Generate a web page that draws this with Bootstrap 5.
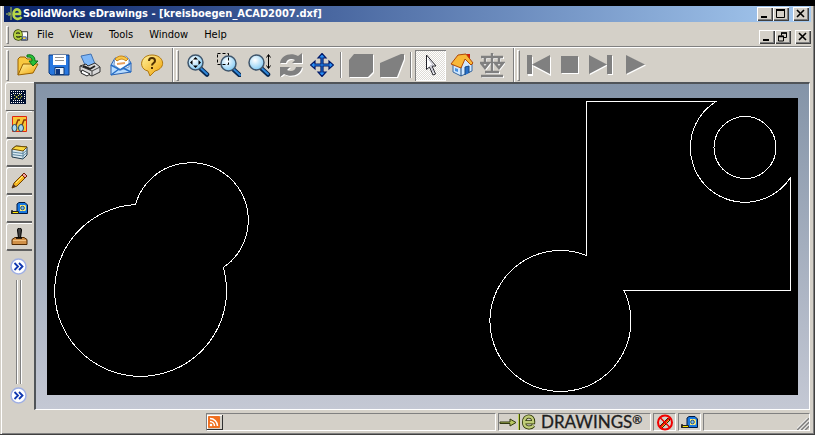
<!DOCTYPE html>
<html lang="en">
<head>
<meta charset="utf-8">
<meta name="viewport" content="width=device-width, initial-scale=1">
<title>SolidWorks eDrawings - [kreisboegen_ACAD2007.dxf]</title>
<link rel="stylesheet" href="https://cdn.jsdelivr.net/npm/bootstrap@5.3.0/dist/css/bootstrap.min.css">
<style>
:root{--face:#d4d0c8;--shade:#808080;--dark:#404040}
body{background:#000;font-family:"DejaVu Sans Condensed","DejaVu Sans",sans-serif;font-size:11px;line-height:14px;color:#000;padding-top:6px}
svg{display:block}
button{padding:0;border:0;background:none;color:#000}
.frame{background:var(--face);border-right:1px solid var(--dark);border-bottom:1px solid var(--dark);box-shadow:inset 1px 0 var(--face),inset 2px 0 #fff,inset -1px -1px var(--shade);padding:0 3px 2px 4px;min-height:0}
.titlebar{height:16px;background:linear-gradient(90deg,#0a246a,#a6caf0);color:#fff;padding:0 2px}
.titlebar h1{font-size:11px;line-height:16px;font-weight:700}
.winbtn{width:16px;height:14px;background:var(--face);box-shadow:inset 1px 1px #fff,inset -1px -1px var(--dark),inset -2px -2px var(--shade)}
.menubar{height:24px;padding:2px 0 0 2px}
.menubar a{color:#000;text-decoration:none;padding:0 8px}
.menubar a:hover{background:#0a246a;color:#fff}
.grip{width:3px;border:1px solid;border-color:#fff var(--shade) var(--shade) #fff}
.g-menu{height:18px}
.tools{height:36px;border-top:1px solid var(--shade);box-shadow:inset 0 1px #fff;padding:2px 0 1px 2px}
.g-tool{height:31px;margin-right:3px}
.tool{width:31px;height:31px;display:flex;align-items:center;justify-content:center}
.pressed{box-shadow:inset 1px 1px var(--shade),inset -1px -1px #fff;background:repeating-conic-gradient(#fff 0 25%,#dedbd5 0 50%) 0 0/2px 2px}
.etch{width:2px;height:26px;border-left:1px solid var(--shade);border-right:1px solid #fff;margin:0 3px}
.band{height:34px;margin:0 2px 0 5px}
.side{width:30px;padding-left:1px}
.tab{width:26px;height:28px;margin-left:1px;display:flex;align-items:center;justify-content:center;border-top:1px solid #fff;border-left:1px solid #fff;border-bottom:2px solid #606060;border-radius:3px 0 0 2px}
.tab.on{width:29px;height:29px;margin-left:0;padding-right:4px;border-bottom-width:1px}
.rails{width:6px;border:solid var(--shade);border-width:0 0 0 1px;box-shadow:inset 1px 0 #fff,inset -1px 0 #fff,inset -2px 0 var(--shade);margin:5px 0 3px 11px}
.round{margin:7px 0 0 5px}
.round.low{margin:0 0 6px 5px}
.view{border-top:2px solid #505458;border-left:2px solid #505458;border-right:1px solid #fff;border-bottom:1px solid #fff;background:linear-gradient(#8494a8,#c4c8d4);padding:14px 11px;min-height:0;margin-right:1px}
.sheet,.work{min-height:0}
.sheet{background:#000}
.status{height:22px;padding:3px 1px 1px 202px;gap:2px}
.pane{height:18px;border:1px solid;border-color:var(--shade) #fff #fff var(--shade);display:flex;align-items:center}
.logo{font-family:Lato,"Liberation Sans",sans-serif;font-size:17px;line-height:16px;color:#202020;-webkit-text-stroke:.3px #202020}
.logo sup{font-size:12px;line-height:0;top:-4px}
.w-logo{width:153px}.w-ico{width:23px}.w-end{width:107px}
.rss{box-shadow:inset -1px -1px #303030,inset 1px 1px #fff;width:16px;height:15px}
</style>
<script src="https://cdn.jsdelivr.net/npm/bootstrap@5.3.0/dist/js/bootstrap.bundle.min.js"></script>
</head>
<body class="vh-100 d-flex flex-column overflow-hidden">
<svg width="0" height="0" class="position-absolute" aria-hidden="true">
<defs>
<linearGradient id="gold" x1="0" y1="0" x2="1" y2="1"><stop stop-color="#fff3a0"/><stop offset="1" stop-color="#f0a000"/></linearGradient>
<radialGradient id="glass" cx=".4" cy=".35" r=".7"><stop stop-color="#fff"/><stop offset="1" stop-color="#7cc8f4"/></radialGradient>
<symbol id="lens" viewBox="0 0 24 24"><path d="M14.500 15.500 21 21.500" stroke="#082850" stroke-width="4.500" stroke-linecap="round"/><path d="M15 15.500 21 21" stroke="#2f86d8" stroke-width="2" stroke-linecap="round"/><circle cx="9.500" cy="9.500" r="7.500" fill="url(#glass)" stroke="#40566c" stroke-width="1.500"/></symbol>
<symbol id="tape" viewBox="0 0 17 13"><path d="M6 11.500V2l2-1.500h6L16.500 3v8.500z" fill="#1878e0" stroke="#001840"/><path d="M9 3h5l1 1v4l-1 1H9z" fill="#f8e878"/><circle cx="11.500" cy="6" r="1.800" fill="#78b8e8" stroke="#205080"/><path d="M.500 9.500h7v2h-7z" fill="#ffe800" stroke="#222"/><path d="M1 8v4" stroke="#222" stroke-width="1.500"/></symbol>
<symbol id="chev" viewBox="0 0 17 17"><circle cx="8.500" cy="8.500" r="7.500" fill="#fff" stroke="#a0b0e4" stroke-width="1.500"/><path d="m4.500 5 3.500 3.500L4.500 12M9 5l3.500 3.500L9 12" fill="none" stroke="#1038b0" stroke-width="1.800"/></symbol>
<symbol id="emark" viewBox="0 0 16 16"><path d="M3.500 8.300h8.700C12.800 0 2.500 1 3 8.500c.2 6 7 6 9.500 3" fill="none" stroke="#283000" stroke-width="4"/><path d="M3.500 8.300h8.700C12.800 0 2.500 1 3 8.500c.2 6 7 6 9.500 3" fill="none" stroke="#c0cc78" stroke-width="2.400"/></symbol>
</defs>
</svg>
<main class="frame d-flex flex-column flex-grow-1">
<header class="titlebar d-flex align-items-center flex-shrink-0">
<svg width="17" height="16" viewBox="0 0 17 16" class="flex-shrink-0" aria-hidden="true"><path d="M0 8h4M2.500 6 4.500 8l-2 2M5 1v13" fill="none" stroke="#b8cc50"/><path d="M8 8h6C15 1.500 7 2 7.500 8.500c.3 5 5.500 5.500 8 2.500" fill="none" stroke="#b8d848" stroke-width="2.600"/></svg>
<h1 class="mb-0 flex-grow-1 text-nowrap">SolidWorks eDrawings - [kreisboegen_ACAD2007.dxf]</h1>
<button class="winbtn" aria-label="Minimize"><svg width="16" height="14"><path d="M4 10h6" stroke="#000" stroke-width="2"/></svg></button>
<button class="winbtn me-1" aria-label="Maximize"><svg width="16" height="14"><path d="M3.500 3h8v7.500h-8z" fill="none" stroke="#000"/><path d="M3 3h9" stroke="#000" stroke-width="2"/></svg></button>
<button class="winbtn" aria-label="Close"><svg width="16" height="14"><path d="m4 3 7 7m0-7-7 7" stroke="#000" stroke-width="1.600"/></svg></button>
</header>
<nav class="menubar d-flex align-items-center flex-shrink-0">
<span class="grip g-menu me-1"></span>
<svg width="16" height="14" viewBox="0 0 17 14" class="flex-shrink-0" aria-hidden="true"><path d="M8.500 3.500h7v9h-7z" fill="#fff" stroke="#333"/><path d="M10 9h4v3h-4z" fill="#f8d850" stroke="#2850b0"/><path d="M2 7h6.500C9 1 1.500 1 2 7.500 2.200 12 7 12 9 9.500" fill="none" stroke="#304000" stroke-width="3.600"/><path d="M2 7h6.500C9 1 1.500 1 2 7.500 2.200 12 7 12 9 9.500" fill="none" stroke="#b4d040" stroke-width="2"/></svg>
<div class="d-flex flex-grow-1"><a href="#">File</a><a href="#">View</a><a href="#">Tools</a><a href="#">Window</a><a href="#">Help</a></div>
<button class="winbtn mt-1" aria-label="Minimize document"><svg width="16" height="14"><path d="M4 10h6" stroke="#000" stroke-width="2"/></svg></button>
<button class="winbtn mt-1 me-1" aria-label="Restore document"><svg width="16" height="14"><path d="M6.500 5.500V3h5v4.500H9M3.500 6h5v5h-5z" fill="none" stroke="#000"/><path d="M6 3h6M3 6.500h6" stroke="#000" stroke-width="1.500"/></svg></button>
<button class="winbtn mt-1" aria-label="Close document"><svg width="16" height="14"><path d="m4 3 7 7m0-7-7 7" stroke="#000" stroke-width="1.600"/></svg></button>
</nav>
<div class="tools d-flex align-items-center flex-shrink-0" role="toolbar" aria-label="Main tools">
<span class="grip g-tool"></span>
<button class="tool" aria-label="Open"><svg width="24" height="24" viewBox="0 0 24 24"><path d="M2 22V6l2-2h5l2 2h7v5" fill="#f8c840" stroke="#986000"/><path d="M2 22 7 11h15l-5 9z" fill="url(#gold)" stroke="#986000"/><path d="M11 2c5-1 8 1 8 6h3l-5 5-4-5h3c0-3-1-4-5-4z" fill="#28c038" stroke="#087018"/></svg></button>
<button class="tool" aria-label="Save"><svg width="24" height="24" viewBox="0 0 24 24"><path d="M2 2h20v20H4l-2-2z" fill="#2878e0" stroke="#083880"/><path d="M6 2h13v10H6z" fill="#fff"/><path d="M8 4.500h9M8 7.500h9" stroke="#909090"/><path d="M8 14.500h9v7H8z" fill="#e8f0f8" stroke="#103870"/><path d="M9 16h4v5H9z" fill="#103880"/></svg></button>
<button class="tool" aria-label="Print"><svg width="24" height="24" viewBox="0 0 24 24"><path d="m3 3 10-2 4 10-9 3z" fill="#80b8f8" stroke="#4070b0"/><path d="m2 13 6-2 2 2 7-3 5 4v5l-8 4L2 18z" fill="#d8d8d8" stroke="#333"/><path d="m2 13 12 5 8-4M14 18v5" stroke="#444" fill="none"/><path d="m4 17 8 4-3 2-6-3z" fill="#fff" stroke="#222"/><path d="m5 13 7 3 5-3" stroke="#202020" stroke-width="2" fill="none"/></svg></button>
<button class="tool" aria-label="Send by e-mail"><svg width="24" height="24" viewBox="0 0 24 24"><path d="M2 12 6 5h13l3 5v9L2 22z" fill="#b8dcff" stroke="#2860b0"/><path d="m5 12 1-7 11-2 3 3v8l-8 3z" fill="#fff" stroke="#7898c8"/><path d="M6 6c4-4 8-4 13 0l-2 2c-4-3-6-2-9 0z" fill="#f8c848" stroke="#c88010"/><path d="m2 12 9 5 11-7M2 22l8-6M22 19l-8-4" fill="none" stroke="#2870c8" stroke-width="1.500"/><path d="m8 11 8-1" stroke="#e8a060" stroke-width="2"/></svg></button>
<button class="tool" aria-label="Help"><svg width="24" height="24" viewBox="0 0 24 24"><path d="M8 18C-2 16 0 2 12 2s15 13 3 16l-5 5z" fill="url(#gold)" stroke="#b07810"/><path d="M9 8c0-4 6-4 6 0 0 2-3 2-3 4.500M12 14v2" fill="none" stroke="#503000" stroke-width="2"/></svg></button>
<span class="etch band"></span><span class="grip g-tool"></span>
<button class="tool" aria-label="Zoom to fit"><svg width="24" height="24" viewBox="0 0 24 24"><use href="#lens"/><path d="M9.500 4 12 6.500H7zM9.500 15 12 12.500H7zM4 9.500 6.500 7v5zM15 9.500 12.500 7v5z" fill="#000"/></svg></button>
<button class="tool" aria-label="Zoom to area"><svg width="24" height="24" viewBox="0 0 24 24"><use href="#lens" x="2" y="1"/><path d="M.500.500h11v11H.500z" fill="none" stroke="#000" stroke-dasharray="3 2"/></svg></button>
<button class="tool" aria-label="Zoom in or out"><svg width="24" height="24" viewBox="0 0 24 24"><use href="#lens" x="-1"/><path d="M20.500 2v13M18.500 4.500l2-3 2 3M18.500 12.500l2 3 2-3" fill="none" stroke="#000"/></svg></button>
<button class="tool" aria-label="Rotate" disabled><svg width="24" height="24" viewBox="0 0 24 24"><path transform="translate(1 1)" fill="#fff" d="M1 10C2 2 12-1 19 3l4-3v10H13l3-3c-4-2-8-1-9 3zM23 14c-1 8-11 11-18 7l-4 3V14h10l-3 3c4 2 8 1 9-3z"/><path fill="#808080" d="M1 10C2 2 12-1 19 3l4-3v10H13l3-3c-4-2-8-1-9 3zM23 14c-1 8-11 11-18 7l-4 3V14h10l-3 3c4 2 8 1 9-3z"/></svg></button>
<button class="tool" aria-label="Pan"><svg width="24" height="24" viewBox="0 0 24 24"><path d="m12 .500 4 4.500h-3v6h6V8l4.500 4-4.500 4v-3h-6v6h3l-4 4.500L8 19h3v-6H5v3L.500 12 5 8v3h6V5H8z" fill="#2890f8" stroke="#001868" stroke-width="1.200"/></svg></button>
<span class="etch"></span>
<button class="tool" aria-label="Shaded" disabled><svg width="26" height="25" viewBox="0 0 26 25"><path d="M1 7 6 1h19v18l-5 5H1z" fill="#fff" transform="translate(1 1)"/><path d="M1 7 6 1h19v18l-5 5H1z" fill="#808080"/></svg></button>
<button class="tool" aria-label="Perspective" disabled><svg width="26" height="25" viewBox="0 0 26 25"><path d="M1 10 22 1h3v5l-7 18H1z" fill="#fff" transform="translate(1 1)"/><path d="M1 10 22 1h3v5l-7 18H1z" fill="#808080"/></svg></button>
<span class="etch"></span>
<button class="tool pressed" aria-label="Select" aria-pressed="true"><svg width="24" height="24" viewBox="0 0 24 24"><path d="M7.500 2v14.500l3-2.500 3.500 8 2.500-1-3.500-8h4z" fill="#fff" stroke="#202028"/><path d="m9.500 6 4.500 6-2.500.500 3 7" fill="none" stroke="#b8b8c8"/></svg></button>
<button class="tool" aria-label="Home view"><svg width="24" height="24" viewBox="0 0 24 24"><path d="M17 1h3v9h-3z" fill="#d02010"/><path d="M3 12v7l8 4 11-5v-8l-6-6z" fill="#d0e8ff" stroke="#3868a0"/><path d="M11 14v9M15 22v-8l4-1v7" fill="#2870c8" stroke="#184880"/><path d="M1 11 8 2l8-1 7 9-2 2-6-6-4 9z" fill="#f8b838" stroke="#b04808"/><path d="m5 15 3 1v3l-3-1z" fill="#4890e0"/></svg></button>
<button class="tool" aria-label="Mass properties" disabled><svg width="25" height="25" viewBox="0 0 25 25"><path transform="translate(1 1)" d="M12 0v20M1 4h22M5 4v7M19 4v7M1 10l4 5 4-5zM15 10l4 5 4-5zM5 19h14M1 23h22" fill="none" stroke="#fff" stroke-width="2"/><path d="M12 0v20M1 4h22M5 4v7M19 4v7M1 10l4 5 4-5zM15 10l4 5 4-5zM5 19h14M1 23h22" fill="none" stroke="#808080" stroke-width="2.400"/></svg></button>
<span class="etch band"></span><span class="grip g-tool"></span>
<button class="tool" aria-label="Previous" disabled><svg width="25" height="22" viewBox="0 0 25 22"><path d="M1 2h5v19H1zM24 2v19L6 11.500z" fill="#fff" transform="translate(1 1)"/><path d="M1 1h5v19H1zM24 1v19L6 10.500z" fill="#808080"/></svg></button>
<button class="tool" aria-label="Stop" disabled><svg width="18" height="18"><path d="M1 1h17v17H1z" fill="#fff"/><path d="M0 0h17v17H0z" fill="#808080"/></svg></button>
<button class="tool" aria-label="Next" disabled><svg width="25" height="22" viewBox="0 0 25 22"><path d="M20 2h5v19h-5zM2 2v19l18-9.500z" fill="#fff"/><path d="M19 1h5v19h-5zM1 1v19l18-9.500z" fill="#808080"/></svg></button>
<button class="tool ms-1" aria-label="Play" disabled><svg width="20" height="22" viewBox="0 0 20 22"><path d="M1 2v19l19-9.500z" fill="#fff"/><path d="M0 1v19l19-9.500z" fill="#808080"/></svg></button>
</div>
<section class="work d-flex flex-grow-1">
<aside class="side d-flex flex-column flex-shrink-0">
<button class="tab on" aria-label="Drawing sheet"><svg width="16" height="14" viewBox="0 0 16 14"><path d="M0 0h16v14H0z" fill="#001030"/><path d="M1 1.500h14M1 12.500h14M1.500 4v6M14.500 4v6M3 3.500h10M3 10.500h10" stroke="#fff" stroke-dasharray="1 1"/><path d="m4 5 3 2 3-3 2 3M4 9l3-2 2 2 3-2" stroke="#e8e850" fill="none" stroke-dasharray="1.500 1"/></svg></button>
<button class="tab" aria-label="Views"><svg width="17" height="17" viewBox="0 0 17 17"><path d="M1.500.500h14v15h-14z" fill="#f8c838" stroke="#e02810"/><path d="m5 9 2-5h2M11 9l2-5h2" fill="none" stroke="#883800" stroke-width="1.500"/><ellipse cx="3.500" cy="12" rx="2.500" ry="3.500" fill="#a8d8f0" stroke="#204860"/><ellipse cx="10" cy="12" rx="2.500" ry="3.500" fill="#a8d8f0" stroke="#204860"/></svg></button>
<button class="tab" aria-label="Layers"><svg width="17" height="15" viewBox="0 0 17 15"><path d="m1 4 4-3 11 1v8l-4 4-11-2z" fill="#d8e8f0" stroke="#203848"/><path d="m1 4 4-3 11 1-4 4z" fill="#f8d840" stroke="#785000"/><path d="m1 7 11 1.500L16 5M1 9.500 12 11l4-3.500M12 6v8" fill="none" stroke="#6088a0"/></svg></button>
<button class="tab" aria-label="Markup"><svg width="17" height="17" viewBox="0 0 17 17"><path d="m1 16 2-5L12 2l3 3-9 9z" fill="#f8b820" stroke="#704000"/><path d="m11 3 2-2 3 3-2 2z" fill="#f0a0a0" stroke="#702000"/><path d="m1 16 1.500-4 2.500 2.500z" fill="#503020"/><path d="m5 11 7-7" stroke="#fff080"/></svg></button>
<button class="tab" aria-label="Measure"><svg width="17" height="13"><use href="#tape"/></svg></button>
<button class="tab" aria-label="Stamp"><svg width="17" height="17" viewBox="0 0 17 17"><path d="M6.500 2a2 2 0 0 1 4 0L9.500 10h-2z" fill="#404040" stroke="#000"/><path d="m1 11.500 3-2h9l3 2v5H1z" fill="#d09048" stroke="#502800"/><path d="M5 10h6" stroke="#000" stroke-width="1.500"/><path d="M2 12.500h13" stroke="#f0c080"/></svg></button>
<button class="round" aria-label="Expand upper panel"><svg width="17" height="17"><use href="#chev"/></svg></button>
<span class="rails flex-grow-1"></span>
<button class="round low" aria-label="Expand lower panel"><svg width="17" height="17"><use href="#chev"/></svg></button>
</aside>
<div class="view flex-grow-1">
<div class="sheet w-100 h-100">
<svg class="w-100 h-100" viewBox="47 98 751 297" role="img" aria-label="Drawing of circular arcs" fill="none" stroke="#fff" stroke-width="1" shape-rendering="crispEdges">
<path d="M135.500 204.500A57.500 57.500 0 1 1 223.500 267.500A86 86 0 1 1 135.500 204.500z"/>
<path d="M624 290.500A70.500 70.500 0 1 1 586.500 255.500V101.500H716A54.500 54.500 0 1 0 790.500 177.500V290.500z"/>
<circle cx="745" cy="147.500" r="31"/>
</svg>
</div>
</div>
</section>
<footer class="status d-flex flex-shrink-0">
<div class="pane flex-grow-1"><button class="rss" aria-label="News feed"><svg width="15" height="14" viewBox="0 0 15 14"><rect x="1" y="1" width="12" height="12" rx="1" fill="#f07020"/><circle cx="4" cy="10" r="1.300" fill="#fff"/><path d="M3 6.500A4.500 4.500 0 0 1 7.500 11M3 3.500A7.500 7.500 0 0 1 10.500 11" fill="none" stroke="#fff" stroke-width="1.500"/></svg></button></div>
<div class="pane w-logo"><svg width="38" height="16" viewBox="0 0 38 16" class="me-1 flex-shrink-0" aria-hidden="true"><path d="M1 8h10V5l6 3.500-6 3.500V9.500H1z" fill="#b8c860" stroke="#303810"/><path d="M20.500 0v16" stroke="#405000"/><path d="M19.500 0v16" stroke="#c0d060"/><use href="#emark" x="22" width="16" height="16"/></svg><span class="logo text-nowrap">DRAWINGS<sup>®</sup></span></div>
<div class="pane w-ico justify-content-center"><svg width="18" height="17" viewBox="0 0 18 17" role="img" aria-label="Markup disabled"><path d="m3 13 9-9 2 2-9 9z" fill="#f8c020" stroke="#302000"/><circle cx="9" cy="8.500" r="7" fill="none" stroke="#f00000" stroke-width="2"/><path d="m4 3.500 10 10M14 3.500l-10 10" stroke="#f00000" stroke-width="1.500"/></svg></div>
<div class="pane w-ico justify-content-center"><svg width="17" height="13" role="img" aria-label="Measure enabled"><use href="#tape"/></svg></div>
<div class="pane w-end justify-content-end align-items-end"><svg width="12" height="12" viewBox="0 0 12 12" aria-hidden="true"><path d="M0 12 12 0M4 12l8-8M8 12l4-4" stroke="#808080" stroke-width="1.800"/><path d="M-1.500 12 12-1.500M2.500 12 12 2.500M6.500 12 12 6.500" stroke="#fff"/></svg></div>
</footer>
</main>
</body>
</html>
